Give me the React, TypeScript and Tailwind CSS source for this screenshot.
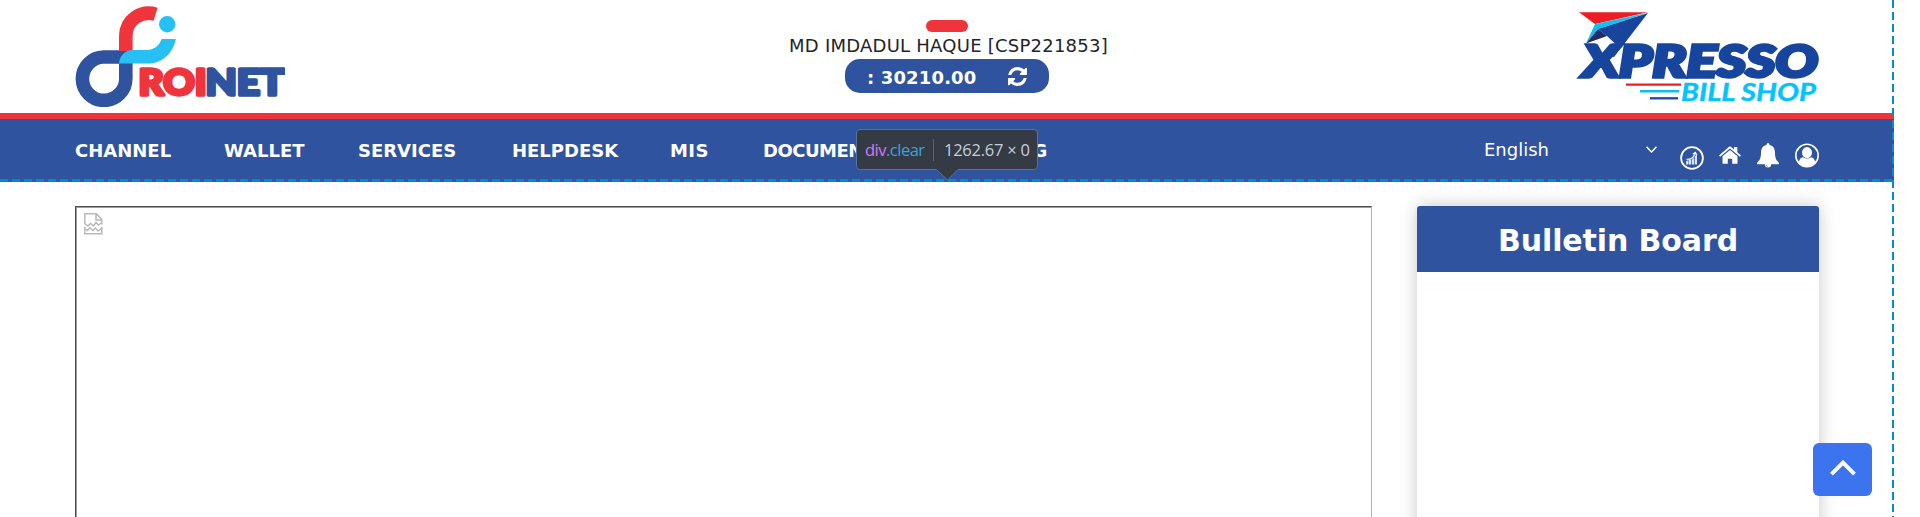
function RoinetLogo() {
  return (
    <svg className="h-[101px] w-[210px]" viewBox="15 6 210 101">
      <path d="M70 57H43.6A21.7 21.7 0 1 0 65.8 78.500V58" fill="none" stroke="#2f539f" strokeWidth="13.6" />
      <path d="M65.8 51V36A23 23 0 0 1 95.6 14.2" fill="none" stroke="#ef343b" strokeWidth="13.6" />
      <path d="M59 63.6C59.500 56 65 50 73 50H87C93 50 99.500 46 101.500 39H115.800C113.500 52 103 63.600 88 63.600Z" fill="#27c0f4" />
      <circle cx="107.200" cy="24.200" r="8.200" fill="#27c0f4" />
      <g fontFamily="Lato, sans-serif" fontWeight="900" fontSize="35.500" strokeWidth="3.400" strokeLinejoin="round">
        <text x="78.500" y="95" textLength="68" lengthAdjust="spacingAndGlyphs" fill="#ef343b" stroke="#ef343b">ROI</text>
        <text x="145.500" y="95" textLength="79" lengthAdjust="spacingAndGlyphs" fill="#2f539f" stroke="#2f539f">NET</text>
      </g>
    </svg>
  );
}

function XpressoLogo() {
  return (
    <svg className="h-[92px] w-[242px] overflow-visible" viewBox="19 11 242 92">
      <path d="M19 12.300H88L35 24Z" fill="#ee1c25" />
      <path d="M88 12.800L35 24L26 43.500L38 29Z" fill="#0fc0f0" />
      <path d="M88 13L38 29L47 36L55 43.500L48 57H54Z" fill="#17459e" />
      <path d="M38 29L26 43.500L47 36Z" fill="#242b6b" />
      <text x="23" y="76.500" textLength="235" lengthAdjust="spacingAndGlyphs" fontFamily="Lato, sans-serif" fontWeight="900" fontStyle="italic" fontSize="44" fill="#17459e" stroke="#17459e" strokeWidth="3.400">XPRESSO</text>
      <path d="M66 84.600H121" stroke="#ee1c25" strokeWidth="2.400" />
      <path d="M80 91.200H119" stroke="#10bdf2" strokeWidth="2.400" />
      <path d="M90 98.300H118" stroke="#1d4fae" strokeWidth="2.400" />
      <text x="121" y="100.600" textLength="135" lengthAdjust="spacingAndGlyphs" fontFamily="Lato, sans-serif" fontWeight="700" fontStyle="italic" fontSize="24" fill="#04c3fa" stroke="#04c3fa" strokeWidth=".4">BILL SHOP</text>
    </svg>
  );
}

function RefreshIcon() {
  return (
    <svg className="size-[19px]" viewBox="0 0 1536 1536" fill="#fff">
      <path d="M1511 928q0 5-1 7-64 268-268 434.500T764 1536q-146 0-282.500-55T238 1324l-129 129q-19 19-45 19t-45-19-19-45V960q0-26 19-45t45-19h448q26 0 45 19t19 45-19 45l-137 137q71 66 161 102t187 36q134 0 250-65t186-179q11-17 53-117 8-23 30-23h192q13 0 22.500 9.500t9.500 22.500zm25-800v448q0 26-19 45t-45 19h-448q-26 0-45-19t-19-45 19-45l138-138Q969 256 768 256q-134 0-250 65T332 500q-11 17-53 117-8 23-30 23H50q-13 0-22.500-9.500T18 608v-7q65-268 270-434.500T768 0q146 0 284 55.500T1297 212l130-129q19-19 45-19t45 19 19 45z" />
    </svg>
  );
}

function GrowthIcon() {
  return (
    <svg className="mt-[3px] size-6" viewBox="0 0 24 24">
      <circle cx="12" cy="12" r="10.900" fill="none" stroke="#fff" strokeWidth="1.800" />
      <path d="M6 15.500L8.500 14V18.500H6ZM9 14L11.300 13.500V18.500H9ZM12 13.500L14 12V18.500H12ZM14.700 10.500L17 8.500V18.500H14.700Z" fill="#dce4f5" />
      <path d="M6.500 13.500C11 13.500 13.500 11.500 14.700 8.500" fill="none" stroke="#dce4f5" strokeWidth="1.600" />
      <path d="M12 8L15.500 5.500L17.500 9Z" fill="#fff" />
    </svg>
  );
}

function HomeIcon() {
  return (
    <svg className="mt-[3px] h-[18px] w-[22px]" viewBox="0 0 22 18" fill="#fff">
      <path d="M3.500 10.300L11 4L18.500 10.300V17.800H13.200V12.800H8.800V17.800H3.500Z" />
      <path d="M0 9.500L10 .8Q11 0 12 .8L15 3.400V1H18.300V6.300L22 9.500L20.900 10.800L11 2.600L1.100 10.800Z" />
    </svg>
  );
}

function BellIcon() {
  return (
    <svg className="h-[25px] w-[22px]" viewBox="0 0 22 25" fill="#fff">
      <path d="M11 0Q12.400 0 12.600 2C16.500 2.800 18 6 18 10C18 16 20 18 22 19.800V21.200H0V19.800C2 18 4 16 4 10C4 6 5.500 2.800 9.400 2Q9.600 0 11 0Z" />
      <path d="M7.800 21H14.200A3.200 3.600 0 0 1 7.800 21Z" />
      <path d="M9 21.800Q9.300 23.200 10.800 23.400" fill="none" stroke="#2f539f" strokeWidth=".6" />
    </svg>
  );
}

function UserIcon() {
  return (
    <svg className="h-[25px] w-6" viewBox="0 0 24 25">
      <circle cx="12" cy="12.500" r="11.200" fill="none" stroke="#fff" strokeWidth="1.600" />
      <path d="M3.800 19.500C4.300 16 6 14.300 8 14.200Q12 17 16 14.200C18 14.300 19.700 16 20.200 19.500Q17 23.500 12 23.500T3.800 19.500Z" fill="#fff" />
      <ellipse cx="12" cy="9.600" rx="5" ry="5.600" fill="#fff" />
    </svg>
  );
}

function BrokenImageIcon() {
  return (
    <svg className="mt-[5px] ml-[7px] h-[22px] w-[19px]" viewBox="0 0 19 22" fill="none" stroke="#b9b9b9" strokeWidth="1.500">
      <path d="M.8 11.500V.8H12.500L17.800 6.500V11.500M12 1V7H17.800M.8 10.500L4 13L6.500 10.500L9.500 13L12 9.500L14.500 12L17.800 9.500" />
      <path d="M.8 14V20.800H17.800V14M.8 15.500L3.500 17.500L6 14.500L9 17.500L11.500 15L14 18L17.800 15" />
    </svg>
  );
}

const menu = [
  { label: "CHANNEL", cls: "w-[149px]" },
  { label: "WALLET", cls: "w-[134px]" },
  { label: "SERVICES", cls: "w-[154px]" },
  { label: "HELPDESK", cls: "w-[158px]" },
  { label: "MIS", cls: "w-[93px] tracking-[0.4px]" },
  { label: "DOCUMENTS", cls: "w-[183px] tracking-[-0.5px]" },
  { label: "TRAINING", cls: "tracking-[0.4px]" },
];

export default function App() {
  return (
    <div className="relative h-[517px] w-[1920px] overflow-hidden bg-white font-['DejaVu_Sans',sans-serif]">
      <header className="flex h-[113px] w-[1894px] items-start justify-between pr-[73px] pl-[75px]">
        <div className="w-[240px] pt-[6px]"><RoinetLogo /></div>
        <div className="flex w-[204px] flex-col items-center pt-5">
          <div className="h-3 w-[42px] rounded-full bg-[#ef343b]" />
          <div className="h-[27px] pl-[3px] text-[18px] leading-[27px] tracking-[0.24px] whitespace-nowrap text-[#212529]">MD IMDADUL HAQUE [CSP221853]</div>
          <div className="flex h-[34px] w-[204px] items-center justify-between rounded-[15px] bg-[#2f539f] pr-[22px] pl-[22px] text-[18px] font-bold text-white">
            <span className="pt-[2px] tracking-[0.15px] whitespace-nowrap">: 30210.00</span>
            <RefreshIcon />
          </div>
        </div>
        <div className="w-[242px] pt-[11px]"><XpressoLogo /></div>
      </header>

      <nav className="flex h-[69px] w-[1894px] items-start justify-between border-t-[6px] border-[#ef343b] bg-[#2f539f] pr-[75px] pl-[75px] text-white">
        <div className="flex pt-[18px] text-[18px] leading-[27px] font-bold">
          {menu.map((m) => (
            <div key={m.label} className={m.cls}>{m.label}</div>
          ))}
        </div>
        <div className="flex items-start pt-[24px]">
          <div className="-mt-[7px] flex w-[196px] items-center text-[18px] leading-[27px]">
            <span className="w-[162px]">English</span>
            <svg className="h-[7px] w-[11px]" viewBox="0 0 11 7" fill="none" stroke="#fff" strokeWidth="1.500"><path d="M.5 .7L5.500 6L10.500 .7" /></svg>
          </div>
          <div className="flex items-start">
            <div className="w-[39px]"><GrowthIcon /></div>
            <div className="w-[38px]"><HomeIcon /></div>
            <div className="w-[38px]"><BellIcon /></div>
            <UserIcon />
          </div>
        </div>
      </nav>

      <main className="flex pt-6 pl-[75px]">
        <div className="h-[400px] w-[1297px] border-t border-r border-l border-t-[#4c4c4c] border-r-[#b2b2b2] border-l-[#4c4c4c]">
          <div className="h-full border-t border-l border-[#9f9f9f]"><BrokenImageIcon /></div>
        </div>
        <section className="ml-[45px] h-[400px] w-[402px] rounded-[4px] bg-white shadow-[0_0_18px_rgba(0,0,0,0.22)]">
          <h2 className="h-[66px] rounded-t-[3px] bg-[#2f539f] pt-[2px] text-center text-[30px] leading-[66px] font-bold tracking-[-0.1px] text-white">Bulletin Board</h2>
        </section>
      </main>

      <div className="absolute top-[179px] left-0 h-[3px] w-[1894px] bg-[repeating-linear-gradient(90deg,#008cd0_0_8px,#3f539f_8px_12px)]" />
      <div className="absolute top-0 left-[1892px] h-[517px] w-[2px] bg-[repeating-linear-gradient(180deg,#0a8acb_0_8px,transparent_8px_12px)]" />

      <div className="absolute top-[129px] left-[856px] flex h-[41px] w-[182px] items-center rounded-[4px] border border-[#56709f] bg-[#353b45] pt-px pl-2 font-['Open_Sans',sans-serif] text-[16.5px] whitespace-nowrap">
        <span className="w-[68px] tracking-[-0.5px] text-[#36a5d8]"><span className="text-[#d777f5]">div</span>.clear</span>
        <span className="h-[22px] w-px bg-[#5c6370]" />
        <span className="pl-[10px] tracking-[-0.25px] text-[#c8cdd8]">1262.67 × 0</span>
        <svg className="absolute top-[39px] left-[79px] h-[12px] w-[23px]" viewBox="0 0 23 12">
          <path d="M0 0L11.500 11L22.500 0Z" fill="#353b45" />
          <path d="M.5 .5L11.500 11L22 .5" fill="none" stroke="#56709f" />
        </svg>
      </div>

      <button className="absolute top-[443px] left-[1813px] flex h-[53px] w-[59px] items-center justify-center rounded-[6px] bg-[#3b74ee] pb-1">
        <svg className="h-[16px] w-[26px]" viewBox="0 0 26 16" fill="none" stroke="#fff" strokeWidth="4"><path d="M1.500 14.200L13 2.700L24.500 14.200" /></svg>
      </button>
    </div>
  );
}
